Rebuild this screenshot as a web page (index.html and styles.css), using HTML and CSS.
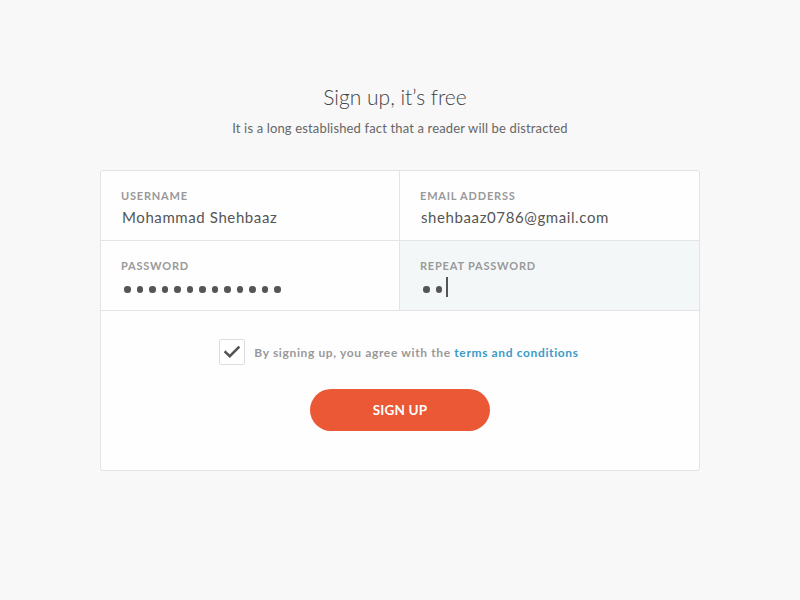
FILE: index.html
```html
<!DOCTYPE html>
<html>
<head>
<meta charset="utf-8">
<link rel="stylesheet" href="styles.css">
</head>
<body>
<main class="page">
  <h1 class="title">Sign up, it’s free</h1>
  <p class="subtitle">It is a long established fact that a reader will be distracted</p>
  <section class="card">
    <div class="fields">
      <div class="field col-left">
        <div class="label">USERNAME</div>
        <div class="value">Mohammad Shehbaaz</div>
      </div>
      <div class="field">
        <div class="label">EMAIL ADDERSS</div>
        <div class="value">shehbaaz0786@gmail.com</div>
      </div>
      <div class="field col-left">
        <div class="label">PASSWORD</div>
        <div class="dots">
          <span class="dot"></span><span class="dot"></span><span class="dot"></span><span class="dot"></span><span class="dot"></span><span class="dot"></span><span class="dot"></span><span class="dot"></span><span class="dot"></span><span class="dot"></span><span class="dot"></span><span class="dot"></span><span class="dot"></span>
        </div>
      </div>
      <div class="field active">
        <div class="label">REPEAT PASSWORD</div>
        <div class="dots">
          <span class="dot"></span><span class="dot"></span><span class="caret"></span>
        </div>
      </div>
    </div>
    <div class="bottom">
      <div class="agree">
        <span class="checkbox">
          <svg width="16" height="12" viewBox="0 0 16 12"><path d="M1.5 6.2 L5.8 10.2 L14.5 1.5" fill="none" stroke="#555" stroke-width="2.6" stroke-linecap="square"/></svg>
        </span>
        <span class="agree-text">By signing up, you agree with the <a class="link">terms and conditions</a></span>
      </div>
      <button class="btn">SIGN UP</button>
    </div>
  </section>
</main>
</body>
</html>
```
FILE: styles.css
```css
html, body {
  margin: 0;
  padding: 0;
}
body {
  background: #f8f8f8;
  font-family: Lato, "Open Sans", sans-serif;
  color: #555;
}
.page {
  width: 600px;
  margin: 0 auto;
  padding-top: 82px;
  display: flex;
  flex-direction: column;
  align-items: center;
}
.title {
  margin: 0;
  padding-right: 10px;
  font-size: 21px;
  line-height: 30px;
  font-weight: 300;
  color: #444;
  letter-spacing: 0px;
}
.subtitle {
  margin: 7px 0 0;
  font-size: 13px;
  line-height: 18px;
  color: #666;
  letter-spacing: 0.15px;
}
.card {
  margin-top: 33px;
  width: 598px;
  background: #fefefe;
  border: 1px solid #e2e2e2;
  border-radius: 3px;
  overflow: hidden;
}
.fields {
  display: grid;
  grid-template-columns: 299px 299px;
}
.field {
  border-bottom: 1px solid #e4e4e4;
  padding: 18px 20px 0;
  box-sizing: content-box;
  height: 51px;
}
.col-left {
  border-right: 1px solid #e4e4e4;
}
.active {
  background: #f4f7f8;
}
.label {
  font-size: 11px;
  line-height: 14px;
  letter-spacing: 0.8px;
  color: #999;
  font-weight: 700;
}
.value {
  margin-top: 4px;
  font-size: 15px;
  line-height: 20px;
  color: #555;
  padding-left: 1px;
  letter-spacing: 0.6px;
}
.dots {
  margin-top: 4px;
  height: 20px;
  display: flex;
  align-items: center;
  gap: 6px;
  padding-left: 3px;
}
.dot {
  width: 6.5px;
  height: 6.5px;
  border-radius: 50%;
  background: #555;
  margin-top: 5px;
}
.caret {
  width: 1.5px;
  height: 20px;
  background: #555;
  margin-left: -2px;
}
.bottom {
  display: flex;
  flex-direction: column;
  align-items: center;
  padding: 28px 0 39px;
}
.agree {
  display: flex;
  align-items: center;
  gap: 9px;
  margin-left: -2px;
}
.checkbox {
  width: 24px;
  height: 24px;
  border: 1px solid #ddd;
  border-radius: 2px;
  background: #fff;
  display: flex;
  align-items: center;
  justify-content: center;
}
.agree-text {
  font-size: 12px;
  color: #999;
  letter-spacing: 0.63px;
  font-weight: 700;
}
.link {
  color: #3a9bc8;
}
.btn {
  margin-top: 24px;
  width: 180px;
  height: 42px;
  border: none;
  border-radius: 21px;
  background: #eb5835;
  color: #fff;
  font-family: Lato, sans-serif;
  font-size: 13.5px;
  font-weight: 700;
  letter-spacing: 0.2px;
}
```
